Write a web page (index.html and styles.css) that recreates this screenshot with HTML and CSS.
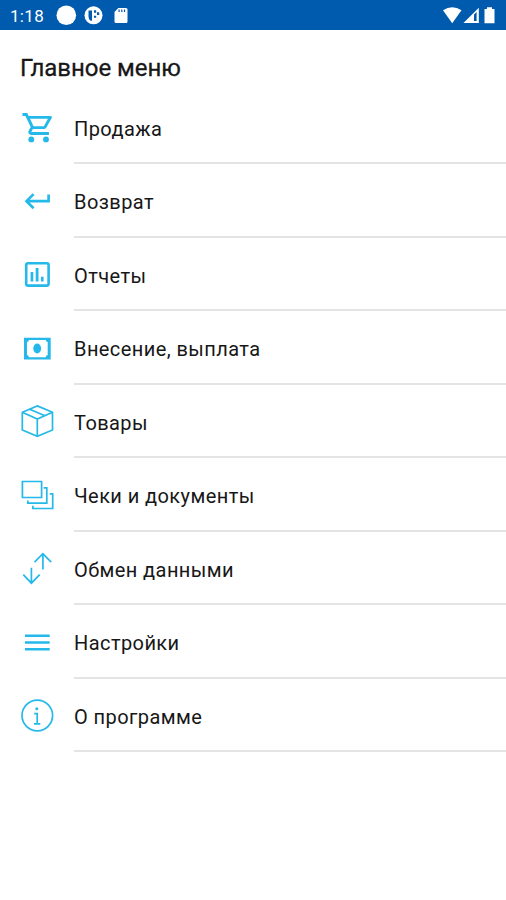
FILE: index.html
```html
<!DOCTYPE html>
<html lang="ru">
<head>
<meta charset="utf-8">
<title>Главное меню</title>
<link rel="stylesheet" href="styles.css">
</head>
<body>
<header class="status">
  <span class="time">1:18</span>
  <svg class="notices" width="76" height="30" viewBox="0 0 76 30">
    <circle cx="10.3" cy="15.3" r="9.8"/>
    <circle cx="37.5" cy="15.3" r="9"/>
    <path class="cut" d="M32.500 10.500h3.500v10.300h-1.500q-2-1.500-2-4zM38 10.200h2.200v2.600H38zM41 12.200h2.200v2.800H41zM38 15.800h2.200v2H38z"/>
    <path d="M62.300 8H70q1.500 0 1.500 1.500v12q0 1.500-1.500 1.500H60q-1.500 0-1.500-1.500V12z"/>
    <path class="cut" d="M62.500 9.500h1.200v2.500h-1.200zM65.200 9.500h1.200v2.500h-1.200zM67.900 9.500h1.200v2.500h-1.200z"/>
  </svg>
  <svg class="system" width="58" height="30" viewBox="0 0 58 30">
    <path d="M1 10.300Q10.200 4 19.500 10.300L10.200 23.200z"/>
    <path d="M36.800 7.800V23H21.500z"/>
    <path class="cut" d="M32 14.500l2.600-2.600V21H32z"/>
    <path d="M42.500 9h2.500V7.300h5V9h2.500v14.200h-10z"/>
  </svg>
</header>
<h1 class="title">Главное меню</h1>
<nav class="menu">
  <a class="item"><svg class="icon" viewBox="0 0 34 34"><path class="fill" transform="translate(1 -1) scale(1.47)" d="M15.550 13c.75 0 1.410-.41 1.750-1.030l3.580-6.490A.996.996 0 0 0 20.010 4H5.210l-.94-2H1v2h2l3.600 7.590-1.350 2.440C4.520 15.370 5.480 17 7 17h12v-2H7l1.100-2h7.450zM6.160 6h12.150l-2.760 5H8.530L6.160 6zM7 18a2 2 0 1 0 0 4 2 2 0 0 0 0-4zm10 0a2 2 0 1 0 0 4 2 2 0 0 0 0-4z"/></svg><span class="label">Продажа</span></a>
  <a class="item"><svg class="icon" viewBox="0 0 34 34"><path class="fill" transform="translate(2 .2) scale(1.33)" d="M19 7v4H5.830l3.580-3.590L8 6l-6 6 6 6 1.410-1.410L5.830 13H21V7z"/></svg><span class="label">Возврат</span></a>
  <a class="item"><svg class="icon" viewBox="0 0 34 34"><rect class="thick" x="6.200" y="5.200" width="22.400" height="22.400" rx="1.800"/><path class="fill" d="M10.600 14h2.700v9.600h-2.700zM15.700 10h2.800v13.600h-2.800zM20.900 18.700h2.700v4.900h-2.700z"/></svg><span class="label">Отчеты</span></a>
  <a class="item"><svg class="icon" viewBox="0 0 34 34"><path class="fill" fill-rule="evenodd" d="M4 5.700h26.700v21.800H4zM9 7.900Q8.700 9.700 7 10v13q1.700.3 2 2.200h16.700q.3-1.900 2-2.200V10q-1.700-.3-2-2.100z"/><ellipse class="fill" cx="17.200" cy="16.500" rx="3.900" ry="5"/></svg><span class="label">Внесение, выплата</span></a>
  <a class="item"><svg class="icon" viewBox="0 0 34 34"><path class="line" d="M17.300.9L32.500 7.300V25L17.300 31.300 2.300 25V7.300zM2.300 7.300l15 6.700 15.200-6.700M17.300 14v17.300M9.700 4.200l15.200 6.500"/></svg><span class="label">Товары</span></a>
  <a class="item"><svg class="icon" viewBox="0 0 34 34"><path class="line" d="M2.400 2.500h19.200v16H2.400zM23.600 8.800h3.200v15.400H7.800v-2.700M29.800 14.800h2.900v14.700H12.900v-2.700"/></svg><span class="label">Чеки и документы</span></a>
  <a class="item"><svg class="icon" viewBox="0 0 34 34"><path class="line" d="M11.400 15.700v15.500M3.300 22.700l8.100 8.500 8.300-8.500M22.900 17.500V1.700M14.500 10.200l8.400-8.500 8.300 8.500"/></svg><span class="label">Обмен данными</span></a>
  <a class="item"><svg class="icon" viewBox="0 0 34 34"><path class="thick" d="M5 9.800h24.700M5 16.500h24.700M5 23.200h24.700"/></svg><span class="label">Настройки</span></a>
  <a class="item"><svg class="icon" viewBox="0 0 34 34"><circle class="line" cx="17.300" cy="16.500" r="15.300"/><path class="line" d="M14.200 14.700h3v10M14 24.800h6.300"/><circle class="fill" cx="16.800" cy="9.700" r="1.500"/></svg><span class="label">О программе</span></a>
</nav>
</body>
</html>
```
FILE: styles.css
```css
* { box-sizing: border-box; }
body {
  margin: 0;
  min-height: 900px;
  background: #fff;
  color: #171717;
  font-family: Roboto, "Liberation Sans", sans-serif;
}
.status {
  display: flex;
  align-items: center;
  height: 30px;
  padding: 0 6px 0 10px;
  background: #005bae;
  color: #fff;
}
.time {
  width: 46px;
  padding-top: 2px;
  font-size: 17px;
  line-height: 20px;
  letter-spacing: 0.3px;
}
.status svg { fill: #fff; }
.status .cut { fill: #005bae; }
.system { margin-left: auto; }
.title {
  margin: 0;
  height: 60.5px;
  padding: 22px 20px 0;
  font-size: 24px;
  line-height: 32px;
  font-weight: 400;
  letter-spacing: -0.05px;
  -webkit-text-stroke: 0.3px #171717;
}
.menu { display: flex; flex-direction: column; }
.item {
  display: flex;
  height: 73.5px;
  padding-left: 20px;
}
.icon {
  flex: none;
  width: 34px;
  height: 34px;
  margin: 20.5px 20px 0 0;
}
.label {
  flex: 1;
  padding-top: 24.2px;
  border-bottom: 2px solid #e4e4e4;
  font-size: 20px;
  line-height: 28px;
  letter-spacing: 0.42px;
}
.fill { fill: #25b9ea; }
.line { fill: none; stroke: #25b9ea; stroke-width: 1.7; }
.thick { fill: none; stroke: #25b9ea; stroke-width: 2.6; }
```
